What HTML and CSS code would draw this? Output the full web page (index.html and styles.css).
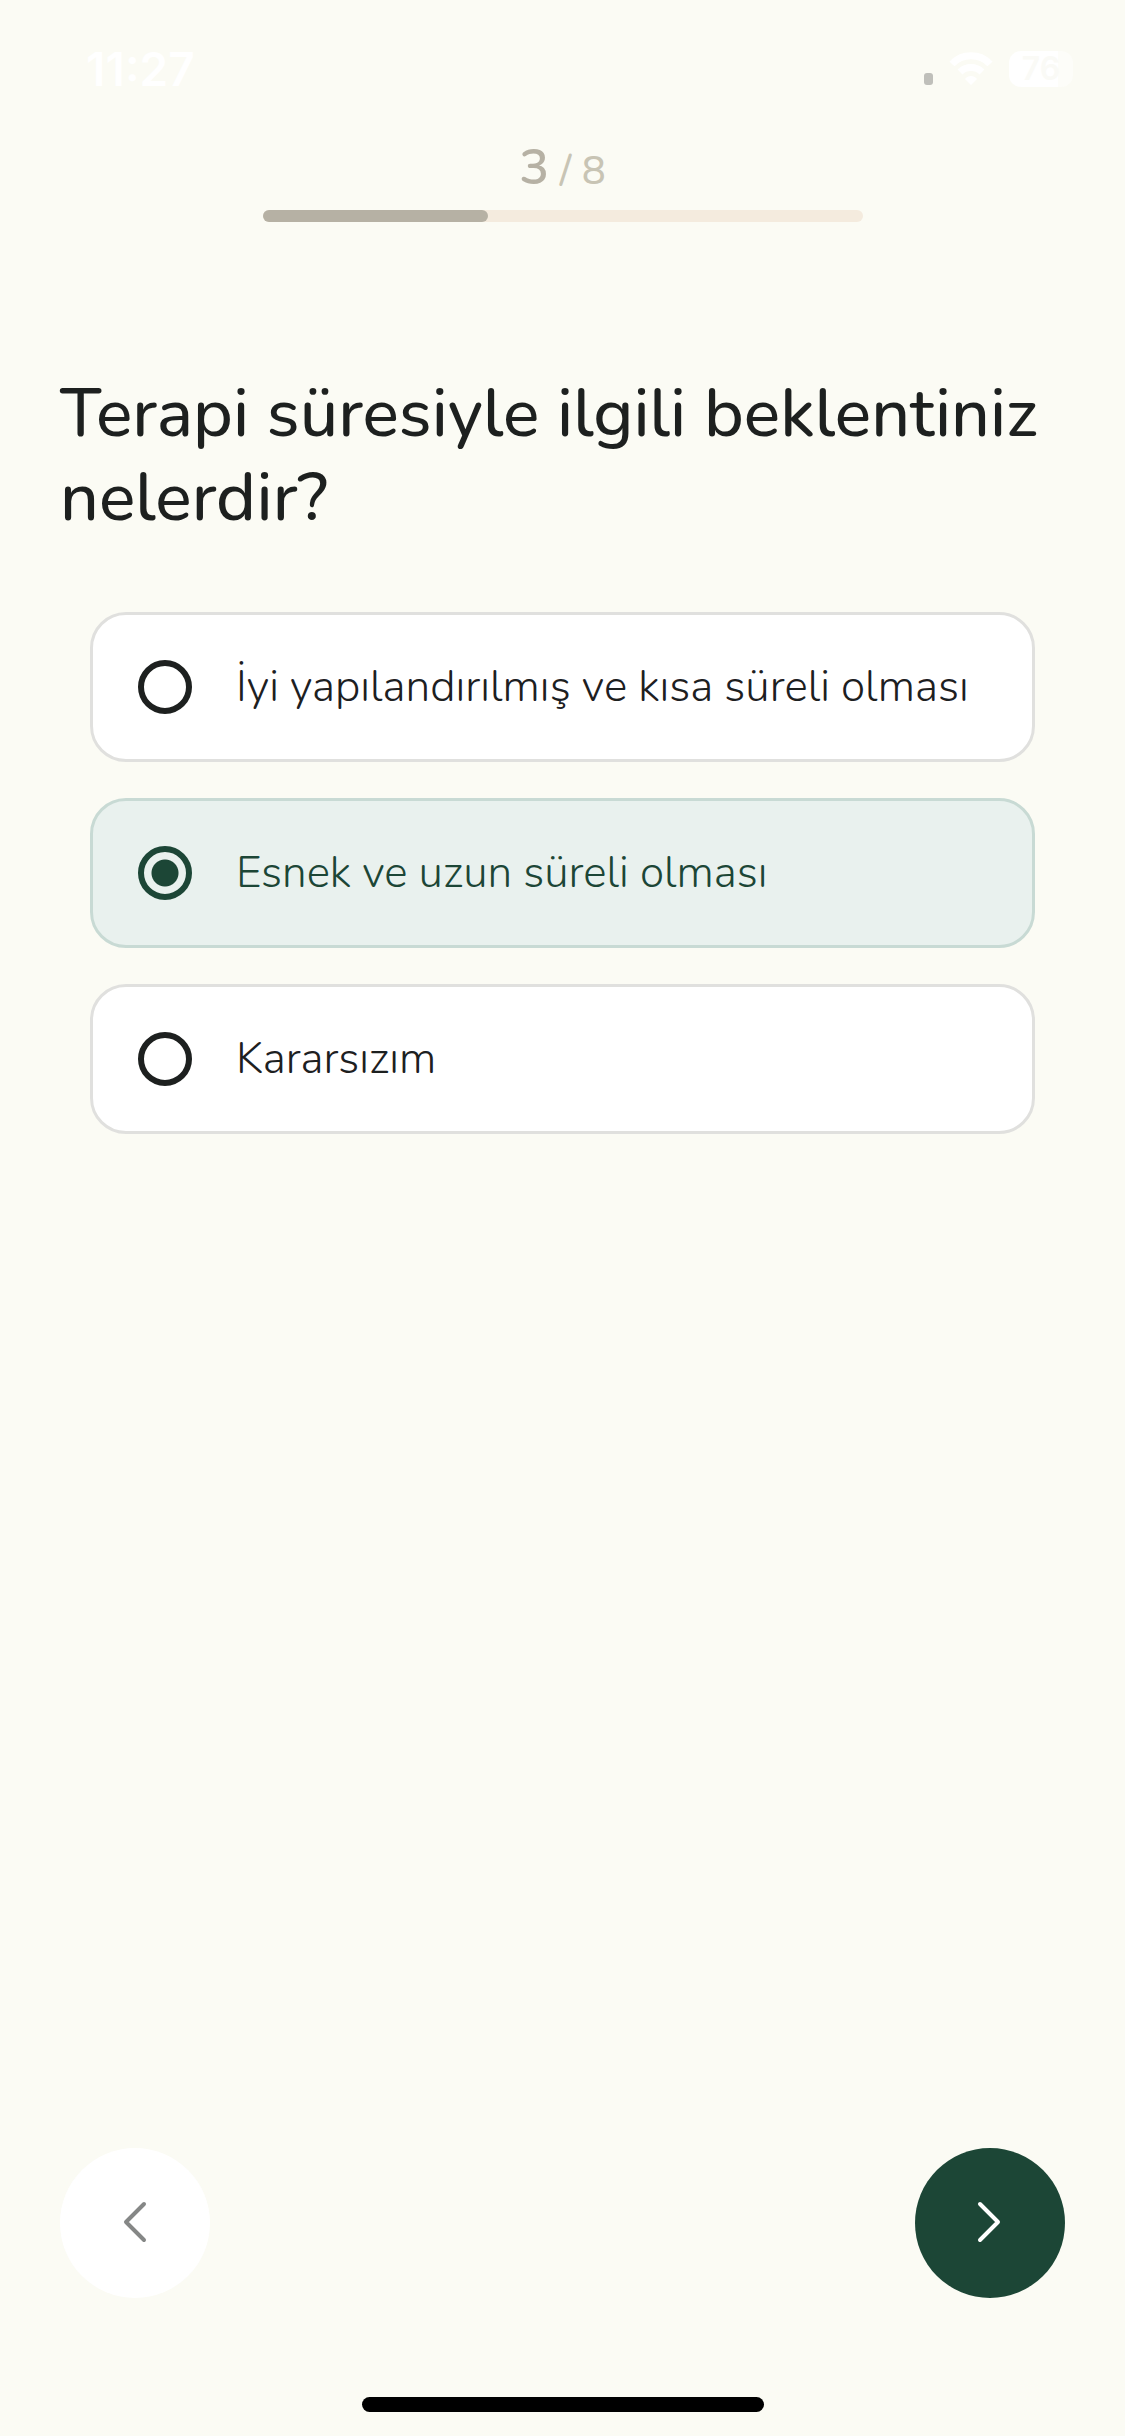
FILE: index.html
```html
<!DOCTYPE html>
<html lang="tr">
<head>
<meta charset="utf-8">
<meta name="viewport" content="width=device-width, initial-scale=1">
<title>Terapi beklentileri</title>
<link rel="stylesheet" href="styles.css">
</head>
<body>
<form class="screen">
  <header class="status-bar">
    <time class="clock">11:27</time>
    <div class="indicators">
      <span class="signal"></span>
      <svg class="wifi" viewBox="0 0 46 34" aria-hidden="true">
        <path d="M4 12C14 1 32 1 42 12M12 20c6-6 16-6 22 0" fill="none" stroke="#fff" stroke-width="7"/>
        <path d="M23 33l-6-6c3-4 9-4 12 0z" fill="#fff"/>
      </svg>
      <span class="battery">76</span>
    </div>
  </header>

  <div class="progress">
    <p class="steps"><strong class="current">3</strong> / 8</p>
    <div class="track"><div class="fill" style="width: 37.5%"></div></div>
  </div>

  <fieldset class="question">
    <legend class="title">Terapi süresiyle ilgili beklentiniz nelerdir?</legend>
    <div class="options">
      <label class="option"><input class="radio" type="radio" name="duration"><span>İyi yapılandırılmış ve kısa süreli olması</span></label>
      <label class="option"><input class="radio" type="radio" name="duration" checked><span>Esnek ve uzun süreli olması</span></label>
      <label class="option"><input class="radio" type="radio" name="duration"><span>Kararsızım</span></label>
    </div>
  </fieldset>

  <nav class="actions">
    <button class="round back" type="button" aria-label="Geri">
      <svg class="chevron" viewBox="0 0 48 48" aria-hidden="true"><path d="M33 5L15 23l18 18"/></svg>
    </button>
    <button class="round next" type="button" aria-label="İleri">
      <svg class="chevron" viewBox="0 0 48 48" aria-hidden="true"><path d="M14 5l18 18-18 18"/></svg>
    </button>
  </nav>
  <div class="home-indicator"></div>
</form>
</body>
</html>
```

FILE: styles.css
```css
* {
  box-sizing: border-box;
}

body {
  margin: 0;
  background: #fbfbf4;
  color: #1d201f;
  font-family: Nunito, "Open Sans", sans-serif;
}

.screen {
  display: flex;
  flex-direction: column;
  min-height: 100vh;
  padding-bottom: 24px;
}

.status-bar {
  display: flex;
  justify-content: space-between;
  align-items: center;
  height: 133px;
  padding: 4px 52px 0 86px;
}

.clock {
  color: #fff;
  font: 600 46px/48px Inter, sans-serif;
}

.indicators {
  display: flex;
  align-items: center;
  gap: 15px;
}

.signal {
  width: 9px;
  height: 12px;
  margin-top: 20px;
  border-radius: 3px;
  background: #bfbfba;
}

.wifi {
  width: 46px;
  height: 34px;
}

.battery {
  width: 64px;
  height: 36px;
  border-radius: 12px;
  background: linear-gradient(90deg, #fff 76%, #fdfdf9 76%);
  color: #fafaf6;
  font: 600 32px/36px Inter, sans-serif;
  text-align: center;
}

.progress {
  display: flex;
  flex-direction: column;
  align-items: center;
  gap: 4px;
}

.steps {
  margin: 0;
  color: #c8c4b4;
  font-size: 40px;
  font-weight: 500;
  line-height: 70px;
}

.current {
  color: #b6b1a4;
  font-size: 50px;
  font-weight: 600;
}

.track {
  width: 600px;
  max-width: 80%;
  height: 12px;
  border-radius: 6px;
  background: #f4ebde;
}

.fill {
  height: 100%;
  border-radius: 6px;
  background: #b6b1a4;
}

.question {
  margin: 150px 0 0;
  padding: 0;
  border: 0;
}

.title {
  padding: 0 60px;
  font-size: 68px;
  font-weight: 500;
  line-height: 84px;
}

.options {
  display: flex;
  flex-direction: column;
  gap: 36px;
  padding: 72px 90px 0;
}

.option {
  display: flex;
  align-items: center;
  gap: 44px;
  min-height: 150px;
  padding: 0 45px;
  border: 3px solid #e0e0de;
  border-radius: 36px;
  background: #fff;
  font-size: 44px;
  font-weight: 300;
  line-height: 54px;
}

.radio {
  appearance: none;
  flex: none;
  width: 54px;
  height: 54px;
  margin: 0;
  border: 6px solid #1d201f;
  border-radius: 50%;
}

.option:has(:checked) {
  border-color: #c8dad4;
  background: #e9f1ee;
  color: #1c4636;
}

.radio:checked {
  border-color: #1c4636;
  background: radial-gradient(circle, #1c4636 13px, transparent 14px);
}

.actions {
  display: flex;
  justify-content: space-between;
  margin-top: auto;
  padding: 0 60px;
}

.round {
  display: grid;
  place-items: center;
  width: 150px;
  height: 150px;
  padding: 0;
  border: 0;
  border-radius: 50%;
}

.back {
  background: #fff;
  color: #858786;
}

.next {
  background: #1c4636;
  color: #fff;
}

.chevron {
  width: 48px;
  height: 48px;
  fill: none;
  stroke: currentColor;
  stroke-width: 4;
  stroke-linecap: round;
  stroke-linejoin: round;
}

.home-indicator {
  align-self: center;
  width: 402px;
  max-width: 60%;
  height: 15px;
  margin-top: 99px;
  border-radius: 8px;
  background: #000;
}
```
